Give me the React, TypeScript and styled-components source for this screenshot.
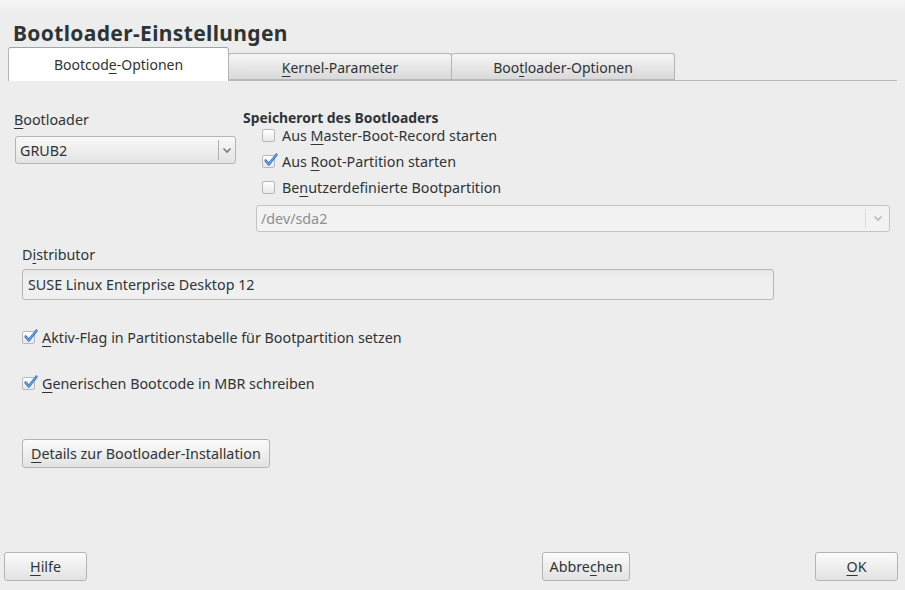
import React from "react";
import styled, { createGlobalStyle } from "styled-components";

const Global = createGlobalStyle`
  html, body { margin: 0; padding: 0; background: #ededed; }
  body { font-family: "Noto Sans", "Open Sans", sans-serif; color: #2e3436; }
  * { box-sizing: border-box; }
`;

const Window = styled.div`
  width: 905px;
  height: 590px;
  display: flex;
  flex-direction: column;
  background: linear-gradient(#f5f5f5 0px, #ededed 14px);
  overflow: hidden;
`;

const Title = styled.h1`
  margin: 0;
  padding: 20px 0 0 13px;
  height: 48px;
  font-size: 21px;
  font-weight: 700;
  letter-spacing: 0.35px;
  line-height: 26px;
  color: #2e3436;
`;

const TabBar = styled.div`
  display: flex;
  align-items: flex-end;
  margin: 0 8px 0 8px;
  height: 33px;
  border-bottom: 1px solid #b8b8b8;
`;

const Tab = styled.div<{ $active?: boolean }>`
  width: ${(p) => (p.$active ? 221 : 224)}px;
  height: ${(p) => (p.$active ? 34 : 27)}px;
  margin-bottom: ${(p) => (p.$active ? -1 : 0)}px;
  display: flex;
  align-items: center;
  justify-content: center;
  font-size: 14px;
  color: #2e3436;
  border: 1px solid #b4b4b4;
  border-bottom: ${(p) => (p.$active ? "none" : "1px solid #b8b8b8")};
  border-top-color: ${(p) => (p.$active ? "#8aa8cc" : "#b4b4b4")};
  border-radius: 3px 3px 0 0;
  background: ${(p) =>
    p.$active ? "#ffffff" : "linear-gradient(#f6f6f6, #d9d9d9)"};
  padding-top: ${(p) => (p.$active ? 0 : 1)}px;
  & + & { margin-left: ${(p) => (p.$active ? 0 : -1)}px; }
`;

const Mn = styled.span`
  text-decoration: underline;
  text-underline-offset: 3px;
  text-decoration-thickness: 1px;
`;

const Body = styled.div`
  flex: 1;
  display: flex;
  flex-direction: column;
  padding: 0 15px 0 14px;
`;

const TopRow = styled.div`
  display: flex;
  margin-top: 28px;
  gap: 7px;
`;

const LeftCol = styled.div`
  width: 222px;
  display: flex;
  flex-direction: column;
  padding-top: 2px;
`;

const Label = styled.div`
  font-size: 14.3px;
  line-height: 18px;
  color: #2e3436;
`;

const Heading = styled.div`
  font-weight: 700;
  font-size: 13.9px;
  line-height: 13px;
  margin-top: 2px;
  color: #2e3436;
`;

const RightCol = styled.div`
  flex: 1;
  display: flex;
  flex-direction: column;
`;

const CheckList = styled.div`
  display: flex;
  flex-direction: column;
  gap: 4px;
`;

const Combo = styled.div<{ $disabled?: boolean; $h: number }>`
  height: ${(p) => p.$h}px;
  display: flex;
  align-items: stretch;
  border: 1px solid ${(p) => (p.$disabled ? "#c4c4c4" : "#b4b4b4")};
  border-radius: 3px;
  background: ${(p) =>
    p.$disabled ? "#f2f2f2" : "linear-gradient(#f8f8f8, #e4e4e4)"};
  font-size: 14.3px;
  color: ${(p) => (p.$disabled ? "#8c8f90" : "#2e3436")};
`;

const ComboText = styled.div`
  flex: 1;
  display: flex;
  align-items: center;
  padding-left: 4px;
`;

const ComboArrow = styled.div<{ $disabled?: boolean; $w: number }>`
  width: ${(p) => p.$w}px;
  margin: 3px 0;
  border-left: 1px solid ${(p) => (p.$disabled ? "#dcdcdc" : "#b0b0b0")};
  display: flex;
  align-items: center;
  justify-content: center;
  color: ${(p) => (p.$disabled ? "#b8b8b8" : "#7a7a7a")};
`;

const CheckRow = styled.div<{ $indent?: number; $h?: number }>`
  display: flex;
  align-items: center;
  height: ${(p) => p.$h ?? 26}px;
  padding-left: ${(p) => p.$indent ?? 0}px;
  font-size: 14.3px;
  gap: 7px;
`;

const Box = styled.span`
  position: relative;
  width: 13px;
  height: 13px;
  flex: none;
  border: 1px solid #b8b8b8;
  border-radius: 2px;
  background: linear-gradient(#ffffff, #e8e8e8);
`;

const Tick = styled.svg`
  position: absolute;
  left: 0px;
  top: -4px;
  width: 15px;
  height: 15px;
  overflow: visible;
`;

const Field = styled.div`
  margin: 5px 0 0 8px;
  width: 752px;
  height: 31px;
  display: flex;
  align-items: center;
  padding-left: 5px;
  font-size: 14.3px;
  border: 1px solid #b8b8b8;
  border-radius: 3px;
  background: linear-gradient(#e6e6e6, #efefef 30%, #f0f0f0);
`;

const Button = styled.button<{ $w?: number }>`
  height: 29px;
  width: ${(p) => (p.$w ? `${p.$w}px` : "auto")};
  padding: 0 8px;
  font-family: inherit;
  font-size: 14.3px;
  color: #2e3436;
  border: 1px solid #b4b4b4;
  border-radius: 3px;
  background: linear-gradient(#fbfbfb, #e2e2e2);
  display: flex;
  align-items: center;
  justify-content: center;
`;

const Footer = styled.div`
  display: flex;
  align-items: center;
  padding: 0 7px 9px 4px;
`;

const Spacer = styled.div<{ $w?: number }>`
  ${(p) => (p.$w ? `width: ${p.$w}px;` : "flex: 1;")}
`;

function Arrow() {
  return (
    <svg width="10" height="7" viewBox="0 0 10 7">
      <path d="M1.5 1.5 L5 5 L8.5 1.5" fill="none" stroke="currentColor" strokeWidth="1.6" />
    </svg>
  );
}

function Check({ checked }: { checked?: boolean }) {
  return (
    <Box>
      {checked && (
        <Tick viewBox="0 0 14 14">
          <path
            d="M2.5 8 L5.5 11.5 L12.5 2.5"
            fill="none"
            stroke="#2f6fc0"
            strokeWidth="2.4"
            strokeLinecap="round"
            strokeLinejoin="round"
          />
          <path
            d="M2.5 8 L5.5 11.5 L12.5 2.5"
            fill="none"
            stroke="#8fb8ea"
            strokeWidth="0.9"
            strokeLinecap="round"
            strokeLinejoin="round"
          />
        </Tick>
      )}
    </Box>
  );
}

export default function App() {
  return (
    <Window>
      <Global />
      <Title>Bootloader-Einstellungen</Title>
      <TabBar>
        <Tab $active>
          <span>
            Bootcod<Mn>e</Mn>-Optionen
          </span>
        </Tab>
        <Tab>
          <span>
            <Mn>K</Mn>ernel-Parameter
          </span>
        </Tab>
        <Tab>
          <span>
            Boo<Mn>t</Mn>loader-Optionen
          </span>
        </Tab>
      </TabBar>
      <Body>
        <TopRow>
          <LeftCol>
            <Label>
              <Mn>B</Mn>ootloader
            </Label>
            <Combo $h={28} style={{ marginLeft: 1, marginTop: 7 }}>
              <ComboText>GRUB2</ComboText>
              <ComboArrow $w={17}>
                <Arrow />
              </ComboArrow>
            </Combo>
          </LeftCol>
          <RightCol>
            <Heading>Speicherort des Bootloaders</Heading>
            <CheckList>
              <CheckRow $indent={19} $h={22}>
                <Check />
                <span>
                  Aus <Mn>M</Mn>aster-Boot-Record starten
                </span>
              </CheckRow>
              <CheckRow $indent={19} $h={22}>
                <Check checked />
                <span>
                  Aus <Mn>R</Mn>oot-Partition starten
                </span>
              </CheckRow>
              <CheckRow $indent={19} $h={22}>
                <Check />
                <span>
                  Be<Mn>n</Mn>utzerdefinierte Bootpartition
                </span>
              </CheckRow>
            </CheckList>
            <Combo $disabled $h={27} style={{ marginLeft: 13, marginTop: 7 }}>
              <ComboText>/dev/sda2</ComboText>
              <ComboArrow $disabled $w={24}>
                <Arrow />
              </ComboArrow>
            </Combo>
          </RightCol>
        </TopRow>
        <Label style={{ marginTop: 14, marginLeft: 8 }}>
          D<Mn>i</Mn>stributor
        </Label>
        <Field>SUSE Linux Enterprise Desktop 12</Field>
        <CheckRow $indent={8} style={{ marginTop: 24 }}>
          <Check checked />
          <span>
            <Mn>A</Mn>ktiv-Flag in Partitionstabelle für Bootpartition setzen
          </span>
        </CheckRow>
        <CheckRow $indent={8} style={{ marginTop: 20 }}>
          <Check checked />
          <span>
            <Mn>G</Mn>enerischen Bootcode in MBR schreiben
          </span>
        </CheckRow>
        <Button style={{ marginTop: 43, marginLeft: 8, alignSelf: "flex-start" }}>
          <span>
            <Mn>D</Mn>etails zur Bootloader-Installation
          </span>
        </Button>
      </Body>
      <Footer>
        <Button $w={83}>
          <span>
            <Mn>H</Mn>ilfe
          </span>
        </Button>
        <Spacer $w={455} />
        <Button $w={88}>
          <span>
            Abbre<Mn>c</Mn>hen
          </span>
        </Button>
        <Spacer />
        <Button $w={83}>
          <span>
            <Mn>O</Mn>K
          </span>
        </Button>
      </Footer>
    </Window>
  );
}
